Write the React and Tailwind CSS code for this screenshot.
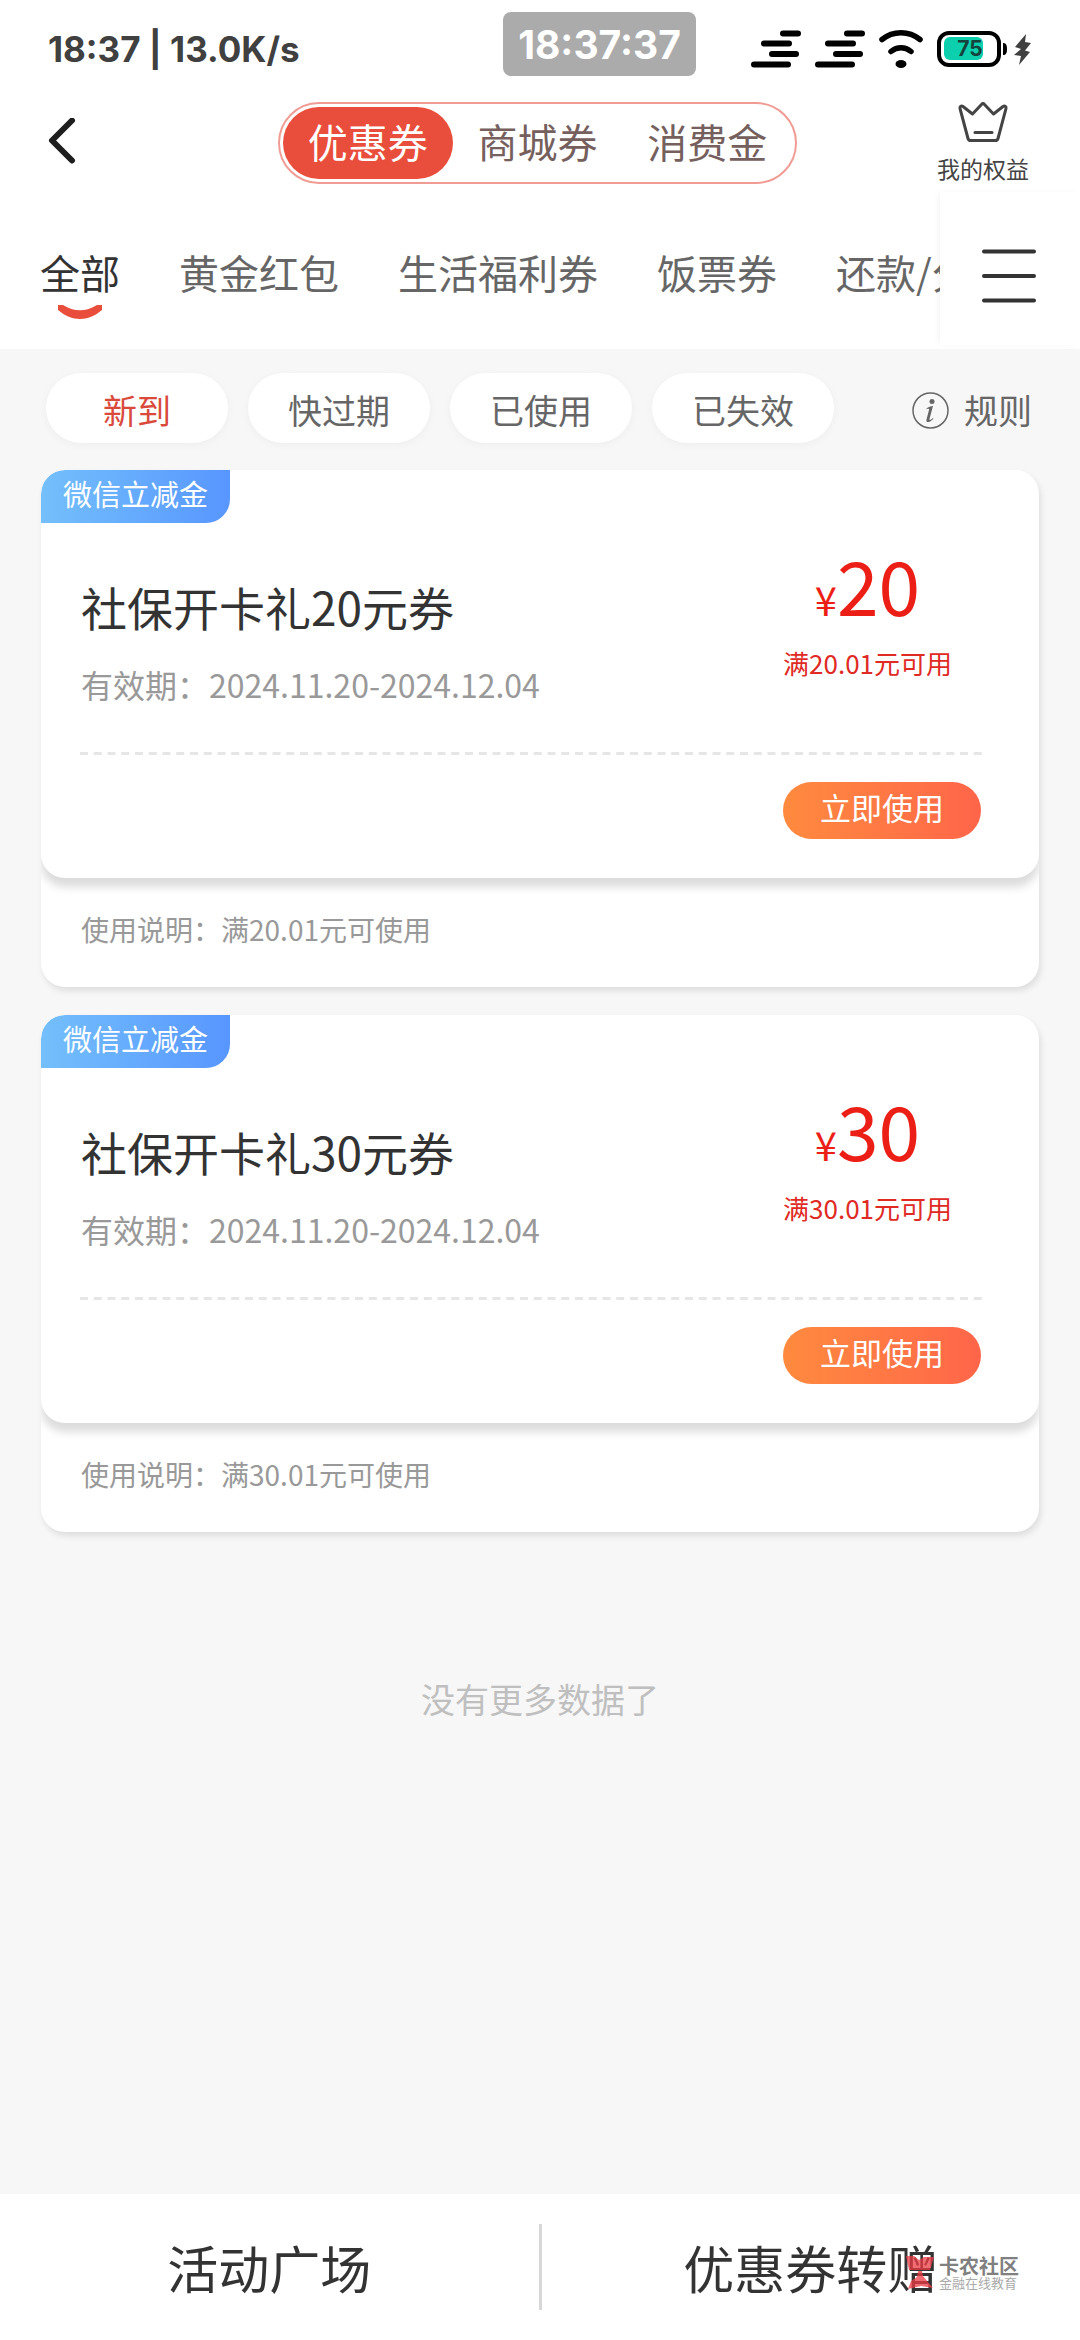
import React, { useState } from 'react';

const segments = ['优惠券', '商城券', '消费金'];
const categories = ['全部', '黄金红包', '生活福利券', '饭票券', '还款/分期'];
const filters = ['新到', '快过期', '已使用', '已失效'];

const coupons = [
    { id: 1, tag: '微信立减金', title: '社保开卡礼20元券', period: '2024.11.20-2024.12.04', amount: 20, limit: '满20.01元可用', note: '满20.01元可使用' },
    { id: 2, tag: '微信立减金', title: '社保开卡礼30元券', period: '2024.11.20-2024.12.04', amount: 30, limit: '满30.01元可用', note: '满30.01元可使用' },
];

function SignalIcon() {
    return (
        <svg className="w-[50px] h-[38px]" viewBox="0 0 50 38" stroke="#000" strokeWidth="6" strokeLinecap="round" aria-hidden="true">
            <path d="M32 3.5h15M13 13.5h25M21 24h24M3 34.5h34" />
        </svg>
    );
}

function WifiIcon() {
    return (
        <svg className="w-[44px] h-[38px]" viewBox="0 0 44 38" fill="none" stroke="#000" strokeWidth="5.5" strokeLinecap="round" aria-hidden="true">
            <path d="M3 9.500c11-9 27-9 38 0M12 21.500c6-5 14-5 20 0" />
            <ellipse cx="22" cy="34" rx="5.5" ry="4" fill="#000" stroke="none" />
        </svg>
    );
}

function BatteryIcon() {
    return (
        <svg className="w-[70px] h-[36px]" viewBox="0 0 70 36" aria-hidden="true">
            <rect x="2" y="2" width="60" height="32" rx="10" fill="#fff" stroke="#000" strokeWidth="4" />
            <rect x="7" y="6" width="39" height="23" rx="6" fill="#0ccfae" />
            <path d="M66 12c3 0 4 2 4 6s-1 6-4 6z" fill="#000" />
            <text x="33" y="25" textAnchor="middle" fontFamily="Inter, sans-serif" fontSize="21" fontWeight="700" fill="#14423c">75</text>
        </svg>
    );
}

function StatusBar() {
    return (
        <div className="relative flex h-[98px] items-center justify-between px-12 font-['Inter',sans-serif]">
            <span className="text-[35px] font-bold text-[#404040]">18:37 | 13.0K/s</span>
            <span className="absolute left-[503px] top-3 flex h-16 w-[193px] items-center justify-center rounded-lg bg-[#ababab] pt-0.5 text-[39px] font-bold text-white">
                18:37:37
            </span>
            <div className="flex items-center">
                <SignalIcon />
                <span className="ml-[14px] flex"><SignalIcon /></span>
                <span className="ml-[14px] flex"><WifiIcon /></span>
                <span className="ml-[14px] flex"><BatteryIcon /></span>
                <svg className="ml-[7px] h-[31px] w-[18px]" viewBox="0 0 18 31" fill="#404040" aria-hidden="true">
                    <path d="M12 0L1 13l6 2L0 21l7 1-2 9L16 18l-5-1.500L17 9l-6-1z" />
                </svg>
            </div>
        </div>
    );
}

function Header() {
    const [active, setActive] = useState(0);

    return (
        <header className="grid h-[90px] grid-cols-[1fr_auto_1fr] items-center pl-[46px] pr-[51px]">
            <button aria-label="返回" className="justify-self-start">
                <svg className="h-[50px] w-[32px]" viewBox="0 0 32 50" fill="none" stroke="#1e1e1e" strokeWidth="6" strokeLinecap="round" strokeLinejoin="round">
                    <path d="M26 2.500L6 22.500l20 20" />
                </svg>
            </button>
            <div className="flex h-[82px] w-[519px] rounded-full border-2 border-[#f09c94] p-[3px]">
                {segments.map((name, i) => (
                    <button
                        key={name}
                        onClick={() => setActive(i)}
                        className={`flex-1 rounded-full pb-1 text-[40px] leading-[64px] ${i === active ? 'bg-[#e94d3b] text-white' : 'text-[#75605d]'}`}
                    >
                        {name}
                    </button>
                ))}
            </div>
            <button className="flex flex-col items-center justify-self-end text-[#444]">
                <svg className="h-[42px] w-[52px]" viewBox="0 0 52 42" fill="none" stroke="#444" strokeWidth="3" strokeLinecap="round" strokeLinejoin="round" aria-hidden="true">
                    <path d="M11 37.500L3 7.500c-.5-2 1.500-3 3-2L15.500 13 24.500 3.500c1-1.200 2-1.200 3 0L36.500 13 46 5.500c1.500-1 3.500 0 3 2L41 37.500c-.4 1.400-1 2-2.500 2h-25c-1.500 0-2.100-.6-2.500-2z" />
                    <path d="M18 31.500h17" />
                </svg>
                <span className="mt-2 text-[23px] leading-[34px]">我的权益</span>
            </button>
        </header>
    );
}

function CategoryTabs() {
    const [active, setActive] = useState(0);

    return (
        <nav className="flex h-[161px]">
            <div className="flex flex-1 items-center gap-[59px] overflow-hidden pl-10 pt-[6px]">
                {categories.map((name, i) => (
                    <button
                        key={name}
                        onClick={() => setActive(i)}
                        className={`relative shrink-0 whitespace-nowrap text-[40px] leading-[66px] ${i === active ? 'text-[#333]' : 'text-[#666]'}`}
                    >
                        {name}
                        {i === active && (
                            <svg className="absolute left-1/2 top-full h-[14px] w-[44px] -translate-x-1/2" viewBox="0 0 44 14" fill="#e94d3b" aria-hidden="true">
                                <path d="M0 0h5c11 7 23 7 34 0h5v5C30 17 14 17 0 5z" />
                            </svg>
                        )}
                    </button>
                ))}
            </div>
            <div className="my-1 flex w-[140px] items-center justify-end pr-[43px] pt-3 shadow-[-3px_0_6px_-2px_rgba(0,0,0,0.06)]">
                <button aria-label="全部分类">
                    <svg className="h-[56px] w-[56px]" viewBox="0 0 56 56" stroke="#333" strokeWidth="4" strokeLinecap="round">
                        <path d="M3 4.500h50M3 29h50M3 53.500h50" />
                    </svg>
                </button>
            </div>
        </nav>
    );
}

function FilterRow() {
    const [active, setActive] = useState(0);

    return (
        <div className="flex items-center justify-between pb-[27px] pl-[46px] pr-12 pt-6">
            <div className="flex gap-5">
                {filters.map((name, i) => (
                    <button
                        key={name}
                        onClick={() => setActive(i)}
                        className={`h-[70px] w-[182px] rounded-full bg-white pt-1 text-[34px] leading-[66px] shadow-[0_2px_10px_rgba(0,0,0,0.04)] ${i === active ? 'text-[#d94a3c]' : 'text-[#666]'}`}
                    >
                        {name}
                    </button>
                ))}
            </div>
            <button className="flex items-center gap-[15px] pt-1 text-[34px] leading-[66px] text-[#666]">
                <svg className="h-[37px] w-[37px]" viewBox="0 0 37 37" aria-hidden="true">
                    <circle cx="18.5" cy="18.5" r="17.5" fill="none" stroke="#666" strokeWidth="1.5" />
                    <circle cx="20" cy="9.5" r="2.5" fill="#666" />
                    <path d="M14.500 16.500c2-1.500 4-2.500 6.500-2.500l-3.500 13c-.3 1.500.5 1.500 3.500-1l.5.7c-3 3.300-8 5.300-7 .8l2.500-9.500c.3-1.300-.5-1.500-2.200-.8z" fill="#666" />
                </svg>
                规则
            </button>
        </div>
    );
}

function CouponCard({ coupon }) {
    return (
        <article className="overflow-hidden rounded-[24px] bg-white shadow-[2px_4px_6px_rgba(0,0,0,0.1)]">
            <div className="h-[408px] overflow-hidden rounded-[24px] bg-white shadow-[0_9px_8px_0_rgba(0,0,0,0.14)]">
                <span className="block h-[53px] w-[189px] rounded-br-[24px] bg-linear-to-r from-[#74bffb] to-[#5896ff] pl-[22px] text-[29px] leading-[47px] text-white">
                    {coupon.tag}
                </span>
                <div className="flex items-start justify-between pl-10 pr-[87px] pt-[25px]">
                    <div className="pt-6">
                        <h2 className="text-[46px] leading-[68px] text-[#333]">{coupon.title}</h2>
                        <p className="pt-5 text-[32px] leading-[48px] text-[#999]">有效期：{coupon.period}</p>
                    </div>
                    <div className="flex flex-col items-center text-[#ec1f17]">
                        <p className="flex items-baseline">
                            <span className="text-[40px] leading-none">¥</span>
                            <span className="text-[75px] leading-[71px]">{coupon.amount}</span>
                        </p>
                        <p className="pt-6 text-[26px] leading-[40px] text-[#e02a24]">{coupon.limit}</p>
                    </div>
                </div>
                <svg className="ml-[39px] mt-11 block h-[3px] w-[902px]" aria-hidden="true">
                    <line x1="0" y1="1.5" x2="902" y2="1.5" stroke="#e6e6e6" strokeWidth="3" strokeDasharray="8 5.750" />
                </svg>
                <div className="flex justify-end pr-[58px] pt-[27px]">
                    <button className="h-[57px] w-[198px] rounded-full bg-linear-to-r from-[#ff8a3e] to-[#ff6549] pb-2 text-[31px] leading-[49px] text-white">
                        立即使用
                    </button>
                </div>
            </div>
            <p className="pb-[6px] pl-10 text-[28px] leading-[103px] text-[#999]">使用说明：{coupon.note}</p>
        </article>
    );
}

function Watermark() {
    return (
        <div className="pointer-events-none absolute bottom-[50px] right-[61px] flex items-center gap-1 text-[#808080]" aria-hidden="true">
            <svg className="h-[34px] w-[30px]" viewBox="0 0 30 34" fill="#ee3b46" fillOpacity="0.75">
                <path d="M1 0h8l5 4 5-3h10l-4 13H4zM13 15h4l1 5 10 12-12-2-13 3 3-8 6-4z" />
            </svg>
            <div>
                <p className="text-[20px] font-bold leading-[20px]">卡农社区</p>
                <p className="text-[13px] leading-[14px] text-[#aaa]">金融在线教育</p>
            </div>
        </div>
    );
}

function BottomBar() {
    return (
        <footer className="sticky bottom-0 flex h-[146px] items-center bg-white text-[51px] text-[#333]">
            <button className="flex-1">活动广场</button>
            <span className="h-[86px] w-[3px] bg-[#d8d8d8]" />
            <button className="flex-1">优惠券转赠</button>
            <Watermark />
        </footer>
    );
}

function App() {
    return (
        <div className="flex min-h-screen flex-col bg-[#f7f7f7] font-['Noto_Sans_CJK_SC',sans-serif]">
            <div className="bg-white">
                <StatusBar />
                <Header />
                <CategoryTabs />
            </div>
            <main className="flex-1">
                <FilterRow />
                <section className="flex flex-col gap-7 px-[41px]">
                    {coupons.map((c) => <CouponCard key={c.id} coupon={c} />)}
                </section>
                <p className="pt-[142px] text-center text-[34px] leading-[50px] text-[#bfbfbf]">没有更多数据了</p>
            </main>
            <BottomBar />
        </div>
    );
}

export default App;
